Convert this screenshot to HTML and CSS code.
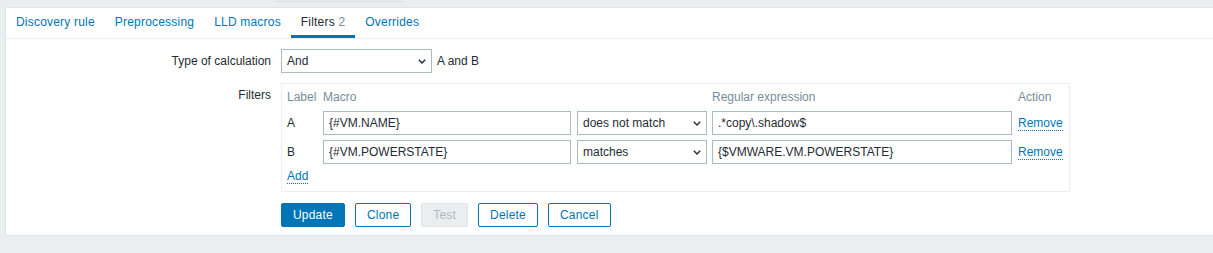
FILE: index.html
```html
<!DOCTYPE html>
<html>
<head>
<meta charset="utf-8">
<link rel="stylesheet" href="styles.css">
</head>
<body>
<div class="topbar"><div class="topbar-stub"></div></div>
<div class="card">
  <ul class="tabs">
    <li><a href="#">Discovery rule</a></li>
    <li><a href="#">Preprocessing</a></li>
    <li><a href="#">LLD macros</a></li>
    <li class="active"><a href="#">Filters <span class="count">2</span></a></li>
    <li><a href="#">Overrides</a></li>
  </ul>
  <div class="form">
    <div class="label label-mid">Type of calculation</div>
    <div class="field-row">
      <div class="select select-calc"><span>And</span><svg class="chev" width="8" height="5" viewBox="0 0 8 5"><path d="M0.8 0.8 L4 4 L7.2 0.8" fill="none" stroke="#1f2c33" stroke-width="1.4"/></svg></div>
      <span class="formula">A and B</span>
    </div>

    <div class="label label-top">Filters</div>
    <div class="filters">
      <div class="th">Label</div>
      <div class="th">Macro</div>
      <div class="th"></div>
      <div class="th">Regular expression</div>
      <div class="th">Action</div>

      <div class="td">A</div>
      <div class="td"><div class="input w-macro">{#VM.NAME}</div></div>
      <div class="td"><div class="select w-op"><span>does not match</span><svg class="chev" width="8" height="5" viewBox="0 0 8 5"><path d="M0.8 0.8 L4 4 L7.2 0.8" fill="none" stroke="#1f2c33" stroke-width="1.4"/></svg></div></div>
      <div class="td"><div class="input w-regex">.*copy\.shadow$</div></div>
      <div class="td"><a class="link" href="#">Remove</a></div>

      <div class="td">B</div>
      <div class="td"><div class="input w-macro">{#VM.POWERSTATE}</div></div>
      <div class="td"><div class="select w-op"><span>matches</span><svg class="chev" width="8" height="5" viewBox="0 0 8 5"><path d="M0.8 0.8 L4 4 L7.2 0.8" fill="none" stroke="#1f2c33" stroke-width="1.4"/></svg></div></div>
      <div class="td"><div class="input w-regex">{$VMWARE.VM.POWERSTATE}</div></div>
      <div class="td"><a class="link" href="#">Remove</a></div>

      <div class="add-row"><a class="link" href="#">Add</a></div>
    </div>

    <div></div>
    <div class="buttons">
      <button class="btn btn-primary">Update</button>
      <button class="btn">Clone</button>
      <button class="btn btn-disabled">Test</button>
      <button class="btn">Delete</button>
      <button class="btn">Cancel</button>
    </div>
  </div>
</div>
</body>
</html>
```

FILE: styles.css
```css
html, body {
  margin: 0;
  padding: 0;
}
body {
  background: #ebeef0;
  font-family: "Liberation Sans", Arial, sans-serif;
  font-size: 12px;
  line-height: 14px;
  color: #1f2c33;
  overflow: hidden;
  width: 1213px;
  height: 253px;
}
.topbar {
  height: 7px;
  display: flex;
}
.topbar-stub {
  margin-left: 276px;
  width: 127px;
  height: 1px;
  border-bottom: 1px solid #dde2e6;
  background: #e6eaed;
}
.card {
  margin-left: 5px;
  width: 1230px;
  background: #fff;
  border: 1px solid #dfe4e7;
  border-right: none;
  padding-bottom: 8px;
}
.tabs {
  list-style: none;
  margin: 0;
  padding: 0;
  display: flex;
  border-bottom: 1px solid #ebeef0;
}
.tabs li a {
  display: block;
  padding: 7px 10px 6px;
  border-bottom: 3px solid transparent;
  color: #0275b8;
  text-decoration: none;
  letter-spacing: 0.2px;
}
.tabs li.active a {
  color: #1f2c33;
  border-bottom-color: #0275b8;
}
.tabs .count {
  color: #768d99;
}
.form {
  display: grid;
  grid-template-columns: 265px auto;
  column-gap: 10px;
  row-gap: 10px;
  padding-top: 10px;
  justify-items: start;
}
.label {
  justify-self: end;
  text-align: right;
}
.label-mid {
  align-self: center;
}
.label-top {
  padding-top: 5px;
}
.field-row {
  display: flex;
  align-items: center;
  gap: 5px;
}
.select {
  box-sizing: border-box;
  height: 24px;
  border: 1px solid #acbbc2;
  display: flex;
  align-items: center;
  justify-content: space-between;
  padding: 0 5px 0 5px;
  background: #fff;
}
.select-calc {
  width: 151px;
}
.chev {
  display: block;
  margin-top: 1px;
}
.filters {
  box-sizing: border-box;
  width: 789px;
  border: 1px solid #ebeef0;
  padding: 6px 5px 8px 5px;
  display: grid;
  grid-template-columns: 36px 254px 135px 306px auto;
  grid-template-rows: 16px 24px 24px 14px;
  row-gap: 5px;
}
.th {
  color: #768d99;
  white-space: nowrap;
}
.td {
  display: flex;
  align-items: center;
  white-space: nowrap;
}
.input {
  box-sizing: border-box;
  height: 24px;
  border: 1px solid #acbbc2;
  padding: 0 5px;
  display: flex;
  align-items: center;
  white-space: nowrap;
}
.w-macro { width: 248px; }
.w-op { width: 130px; }
.w-regex { width: 300px; }
.link {
  color: #0275b8;
  text-decoration: none;
  border-bottom: 1px dotted #0275b8;
}
.add-row {
  grid-column: 1 / -1;
}
.buttons {
  display: flex;
  gap: 10px;
  margin-top: 1px;
}
.btn {
  box-sizing: border-box;
  height: 24px;
  padding: 0 11px;
  font-family: "Liberation Sans", Arial, sans-serif;
  font-size: 12px;
  line-height: 14px;
  letter-spacing: 0.2px;
  color: #0275b8;
  background: #fff;
  border: 1px solid #0275b8;
  border-radius: 2px;
  cursor: pointer;
}
.btn-primary {
  background: #0275b8;
  color: #fff;
}
.btn-disabled {
  background: #ebeef0;
  border-color: #dfe4e7;
  color: #acbbc2;
}
```
